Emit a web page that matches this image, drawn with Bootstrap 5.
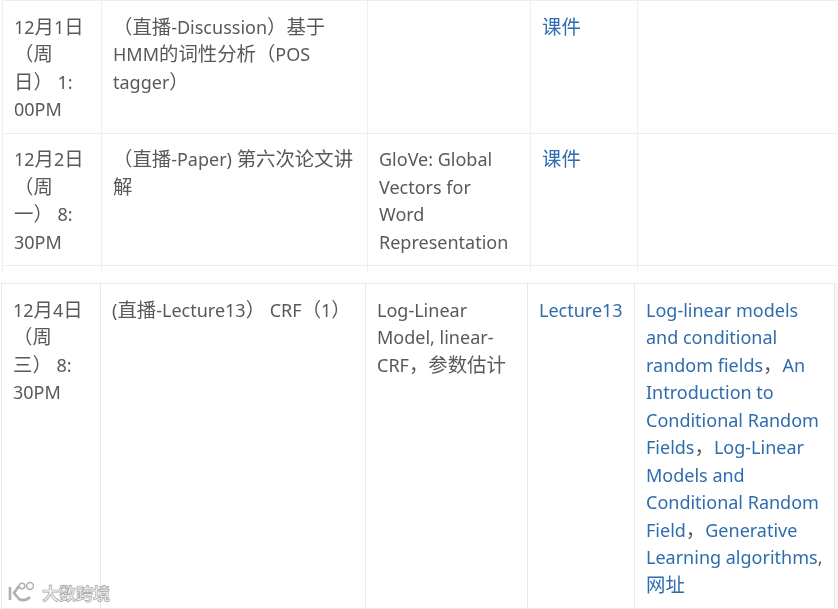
<!DOCTYPE html>
<html lang="zh-CN">
<head>
<meta charset="utf-8">
<title>课程表</title>
<link href="https://cdn.jsdelivr.net/npm/bootstrap@5.3.0/dist/css/bootstrap.min.css" rel="stylesheet">
<style>
html,body{overflow:hidden;height:609px;background:#fff}
body{position:relative;width:838px;margin:0;font-family:"Noto Sans","Noto Sans CJK SC",sans-serif;font-size:18px;line-height:27.5px;color:#595959}
.hz{font-size:19.4px;line-height:1}
.sheet-a{height:272px;overflow:hidden;padding-left:1.5px;filter:blur(.35px)}
.sheet-b{margin-top:11px;padding-left:1px;border-right:3px solid #f8f8f8;filter:blur(.35px)}
.sched{table-layout:fixed;margin:0;border-collapse:collapse;--bs-table-color:#595959;--bs-table-border-color:#eee}
.sheet-a .sched{width:840px}
.sheet-b .sched{width:834px}
.sched td{padding:12.5px 8px 9px 11.5px;border:1.5px solid #eee;vertical-align:top;overflow-wrap:anywhere}
.sheet-b .sched td{border-color:#e8e8e8;padding-left:11px}
.sheet-a tr.stub td{height:40px}
.sheet-a .w1{width:99px}.sheet-a .w2{width:266px}.sheet-a .w3{width:163px}.sheet-a .w4{width:107px}
.sheet-b .w1{width:99px}.sheet-b .w2{width:265px}.sheet-b .w3{width:162px}.sheet-b .w4{width:107px}
.sched a{color:#2f6cad;text-decoration:none}
.mark-wm{position:absolute;left:7px;top:581px;display:flex;align-items:center;gap:5px;color:#f6f6f6;font-size:17px;line-height:24px;font-weight:700;-webkit-text-stroke:.7px #a6a6a6;font-family:"Noto Sans CJK SC",sans-serif}
</style>
</head>
<body>
<div class="sheet-a">
<table class="table table-bordered sched">
<colgroup><col class="w1"><col class="w2"><col class="w3"><col class="w4"><col></colgroup>
<tbody>
<tr>
<td>12<span class="hz">月</span>1<span class="hz">日</span><br><span class="hz">（周</span><br><span class="hz">日）</span> 1:<br>00PM</td>
<td><span class="hz">（直播</span>-Discussion<span class="hz">）基于</span>HMM<span class="hz">的词性分析（</span>POS tagger<span class="hz">）</span></td>
<td></td>
<td><a href="#"><span class="hz">课件</span></a></td>
<td></td>
</tr>
<tr>
<td>12<span class="hz">月</span>2<span class="hz">日</span><br><span class="hz">（周</span><br><span class="hz">一）</span> 8:<br>30PM</td>
<td><span class="hz">（直播</span>-Paper) <span class="hz">第六次论文讲解</span></td>
<td>GloVe: Global<br>Vectors for<br>Word<br>Representation</td>
<td><a href="#"><span class="hz">课件</span></a></td>
<td></td>
</tr>
<tr class="stub"><td></td><td></td><td></td><td></td><td></td></tr>
</tbody>
</table>
</div>
<div class="sheet-b">
<table class="table table-bordered sched">
<colgroup><col class="w1"><col class="w2"><col class="w3"><col class="w4"><col></colgroup>
<tbody>
<tr>
<td>12<span class="hz">月</span>4<span class="hz">日</span><br><span class="hz">（周</span><br><span class="hz">三）</span> 8:<br>30PM</td>
<td>(<span class="hz">直播</span>-Lecture13<span class="hz">）</span> CRF<span class="hz">（</span>1<span class="hz">）</span></td>
<td>Log-Linear Model, linear-CRF<span class="hz">，参数估计</span></td>
<td><a href="#">Lecture13</a></td>
<td><a href="#">Log-linear models and conditional random fields</a><span class="hz">，</span><a href="#">An Introduction to Conditional Random Fields</a><span class="hz">，</span><a href="#">Log-Linear Models and Conditional Random Field</a><span class="hz">，</span><a href="#">Generative Learning algorithms</a>,<br><a href="#"><span class="hz">网址</span></a></td>
</tr>
</tbody>
</table>
</div>
<div class="mark-wm">
<svg width="30" height="24" viewBox="0 0 30 24" fill="none" stroke="#b0b0b0" stroke-width="2.6" aria-hidden="true"><path d="M3 6v13M12 5 7 12l5 6c4 2 8 1 11-2"/><circle cx="15" cy="5" r="2.8" stroke-width="1.5"/><circle cx="23" cy="5" r="3.4" stroke-width="1.5"/></svg>
<span>大数跨境</span>
</div>
<script src="https://cdn.jsdelivr.net/npm/bootstrap@5.3.0/dist/js/bootstrap.bundle.min.js"></script>
</body>
</html>
